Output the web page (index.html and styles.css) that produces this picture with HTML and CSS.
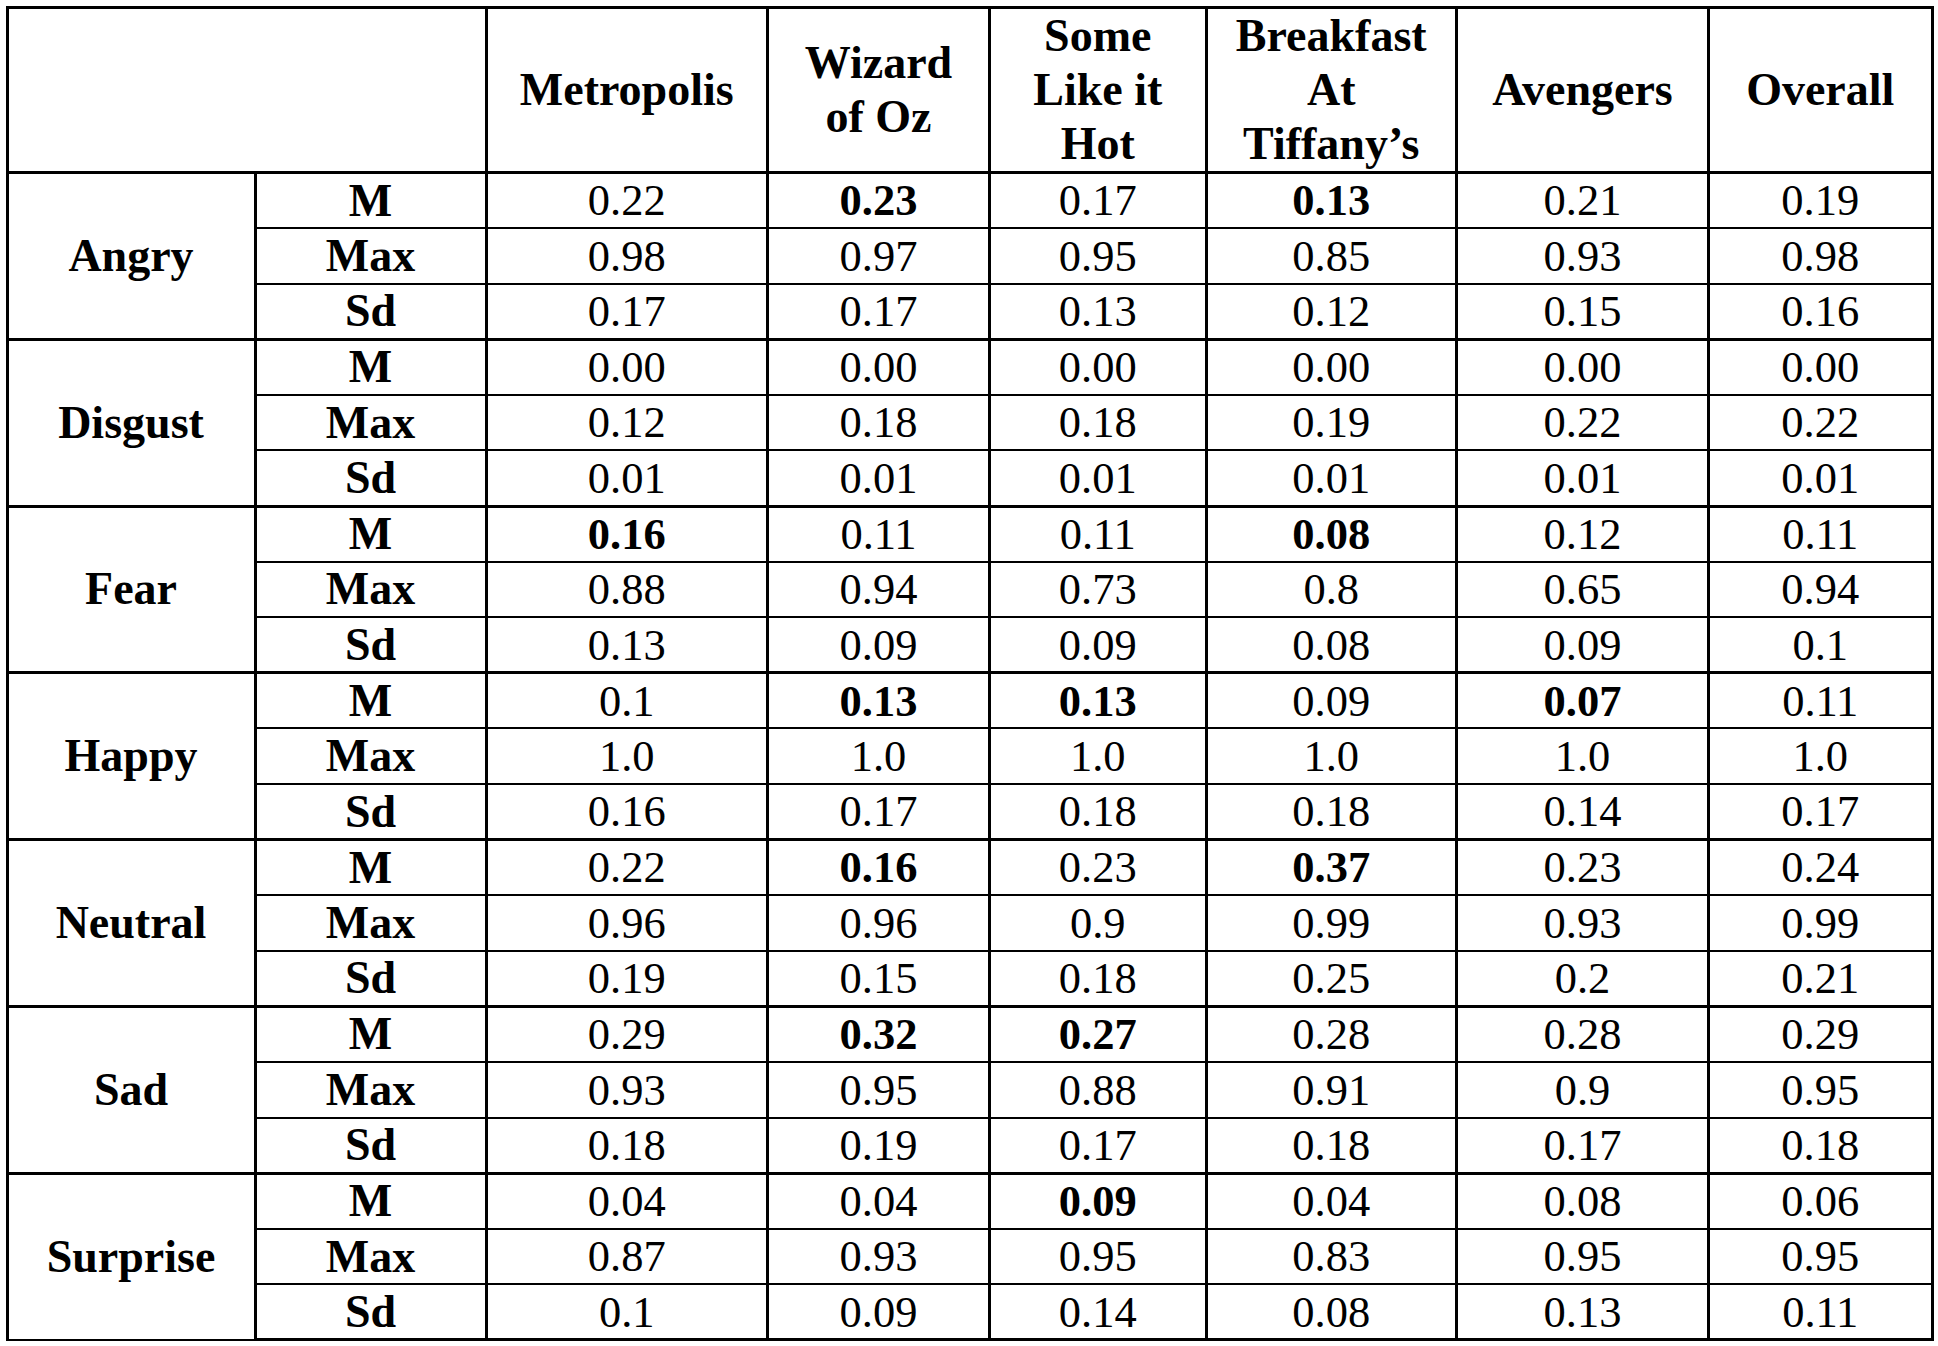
FILE: index.html
```html
<!DOCTYPE html>
<html lang="en">
<head>
<meta charset="utf-8">
<title>Emotion statistics</title>
<link rel="stylesheet" href="styles.css">
</head>
<body>
<table class="stats">
  <colgroup>
    <col class="c-emo">
    <col class="c-stat">
    <col class="c-met">
    <col class="c-wiz">
    <col class="c-some">
    <col class="c-bre">
    <col class="c-ave">
    <col class="c-ove">
  </colgroup>
  <thead>
    <tr class="head">
      <th colspan="2"></th>
      <th>Metropolis</th>
      <th>Wizard<br>of Oz</th>
      <th>Some<br>Like it<br>Hot</th>
      <th>Breakfast<br>At<br>Tiffany’s</th>
      <th>Avengers</th>
      <th>Overall</th>
    </tr>
  </thead>
  <tbody>
    <tr class="grp"><th class="emo" rowspan="3">Angry</th><th class="st">M</th><td>0.22</td><td class="b">0.23</td><td>0.17</td><td class="b">0.13</td><td>0.21</td><td>0.19</td></tr>
    <tr><th class="st">Max</th><td>0.98</td><td>0.97</td><td>0.95</td><td>0.85</td><td>0.93</td><td>0.98</td></tr>
    <tr><th class="st">Sd</th><td>0.17</td><td>0.17</td><td>0.13</td><td>0.12</td><td>0.15</td><td>0.16</td></tr>

    <tr class="grp"><th class="emo" rowspan="3">Disgust</th><th class="st">M</th><td>0.00</td><td>0.00</td><td>0.00</td><td>0.00</td><td>0.00</td><td>0.00</td></tr>
    <tr><th class="st">Max</th><td>0.12</td><td>0.18</td><td>0.18</td><td>0.19</td><td>0.22</td><td>0.22</td></tr>
    <tr><th class="st">Sd</th><td>0.01</td><td>0.01</td><td>0.01</td><td>0.01</td><td>0.01</td><td>0.01</td></tr>

    <tr class="grp"><th class="emo" rowspan="3">Fear</th><th class="st">M</th><td class="b">0.16</td><td>0.11</td><td>0.11</td><td class="b">0.08</td><td>0.12</td><td>0.11</td></tr>
    <tr><th class="st">Max</th><td>0.88</td><td>0.94</td><td>0.73</td><td>0.8</td><td>0.65</td><td>0.94</td></tr>
    <tr><th class="st">Sd</th><td>0.13</td><td>0.09</td><td>0.09</td><td>0.08</td><td>0.09</td><td>0.1</td></tr>

    <tr class="grp"><th class="emo" rowspan="3">Happy</th><th class="st">M</th><td>0.1</td><td class="b">0.13</td><td class="b">0.13</td><td>0.09</td><td class="b">0.07</td><td>0.11</td></tr>
    <tr><th class="st">Max</th><td>1.0</td><td>1.0</td><td>1.0</td><td>1.0</td><td>1.0</td><td>1.0</td></tr>
    <tr><th class="st">Sd</th><td>0.16</td><td>0.17</td><td>0.18</td><td>0.18</td><td>0.14</td><td>0.17</td></tr>

    <tr class="grp"><th class="emo" rowspan="3">Neutral</th><th class="st">M</th><td>0.22</td><td class="b">0.16</td><td>0.23</td><td class="b">0.37</td><td>0.23</td><td>0.24</td></tr>
    <tr><th class="st">Max</th><td>0.96</td><td>0.96</td><td>0.9</td><td>0.99</td><td>0.93</td><td>0.99</td></tr>
    <tr><th class="st">Sd</th><td>0.19</td><td>0.15</td><td>0.18</td><td>0.25</td><td>0.2</td><td>0.21</td></tr>

    <tr class="grp"><th class="emo" rowspan="3">Sad</th><th class="st">M</th><td>0.29</td><td class="b">0.32</td><td class="b">0.27</td><td>0.28</td><td>0.28</td><td>0.29</td></tr>
    <tr><th class="st">Max</th><td>0.93</td><td>0.95</td><td>0.88</td><td>0.91</td><td>0.9</td><td>0.95</td></tr>
    <tr><th class="st">Sd</th><td>0.18</td><td>0.19</td><td>0.17</td><td>0.18</td><td>0.17</td><td>0.18</td></tr>

    <tr class="grp"><th class="emo" rowspan="3">Surprise</th><th class="st">M</th><td>0.04</td><td>0.04</td><td class="b">0.09</td><td>0.04</td><td>0.08</td><td>0.06</td></tr>
    <tr><th class="st">Max</th><td>0.87</td><td>0.93</td><td>0.95</td><td>0.83</td><td>0.95</td><td>0.95</td></tr>
    <tr><th class="st">Sd</th><td>0.1</td><td>0.09</td><td>0.14</td><td>0.08</td><td>0.13</td><td>0.11</td></tr>
  </tbody>
</table>
</body>
</html>
```
FILE: styles.css
```css
html, body {
  margin: 0;
  padding: 0;
  background: #ffffff;
}

body {
  padding: 6px 0 0 5.5px;
  font-family: "Liberation Serif", "Times New Roman", serif;
  color: #000000;
}

.stats {
  border-collapse: collapse;
  table-layout: fixed;
  width: 1928px;
}

.c-emo  { width: 248px; }
.c-stat { width: 231px; }
.c-met  { width: 281.5px; }
.c-wiz  { width: 222px; }
.c-some { width: 216.5px; }
.c-bre  { width: 250.5px; }
.c-ave  { width: 252px; }
.c-ove  { width: 223.5px; }

.stats th,
.stats td {
  padding: 0;
  text-align: center;
  vertical-align: middle;
  border-left: 3px solid #000;
  border-right: 3px solid #000;
  border-top: 2px solid #000;
  border-bottom: 2px solid #000;
  white-space: nowrap;
}

.stats td {
  font-size: 44.5px;
  font-weight: normal;
  line-height: 1;
}

.stats td.b {
  font-weight: bold;
}

.stats th {
  font-size: 46px;
  font-weight: bold;
}

.head th {
  height: 160px;
  line-height: 54px;
  border-top-width: 3px;
  border-bottom-width: 3px;
}

.stats tbody tr {
  height: 55.6px;
}

.stats tr.grp td,
.stats tr.grp th {
  border-top-width: 3px;
}

.stats th.emo,
.stats th.st {
  line-height: 1;
}

.stats tbody tr:last-child td,
.stats tbody tr:last-child th {
  border-bottom-width: 3px;
}
```
